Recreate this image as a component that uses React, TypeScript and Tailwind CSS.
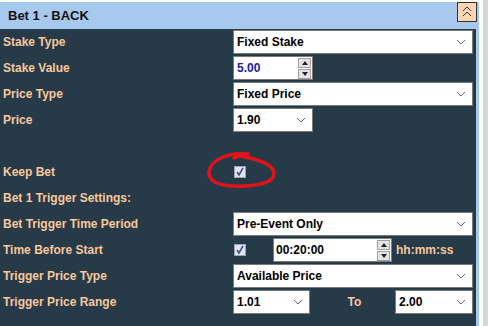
import React from "react";

const font = { fontFamily: '"Liberation Sans", Arial, sans-serif' };

function Chevron() {
  return (
    <svg width="10" height="6" viewBox="0 0 10 6" className="shrink-0">
      <path d="M1 1 L5 5 L9 1" fill="none" stroke="#666" strokeWidth="1" />
    </svg>
  );
}

function Select({ value, w }: { value: string; w: string }) {
  return (
    <div
      className={`${w} h-[24px] bg-white border border-[#7a7a7a] flex items-center justify-between pl-[3px] pr-[6px] text-[12px] font-bold text-black`}
    >
      <span>{value}</span>
      <Chevron />
    </div>
  );
}

function Spinner() {
  return (
    <div className="flex flex-col gap-[1px] mr-[1px]">
      <div className="w-[13px] h-[10px] bg-[#e4e4e4] border border-[#a0a0a0] flex items-center justify-center">
        <svg width="6" height="4" viewBox="0 0 6 4">
          <path d="M0 4 L3 0 L6 4 Z" fill="#222" />
        </svg>
      </div>
      <div className="w-[13px] h-[10px] bg-[#e4e4e4] border border-[#a0a0a0] flex items-center justify-center">
        <svg width="6" height="4" viewBox="0 0 6 4">
          <path d="M0 0 L3 4 L6 0 Z" fill="#222" />
        </svg>
      </div>
    </div>
  );
}

function Checkbox() {
  return (
    <div className="w-[12px] h-[12px] bg-[#dfe5ef] border border-[#9aa3b5] flex items-center justify-center">
      <svg width="10" height="10" viewBox="0 0 10 10">
        <path d="M2 5 L4 8 L8 1" fill="none" stroke="#3e4f94" strokeWidth="1.6" />
      </svg>
    </div>
  );
}

function Label({ children }: { children: React.ReactNode }) {
  return (
    <div className="h-[26px] flex items-center pl-[3px] text-[12px] font-bold text-[#f7c89c] whitespace-nowrap">
      {children}
    </div>
  );
}

function Cell({ children }: { children?: React.ReactNode }) {
  return <div className="h-[26px] flex items-center">{children}</div>;
}

export default function App() {
  return (
    <div className="w-[488px] h-[326px] bg-white flex overflow-hidden" style={font}>
      <div className="w-[479px] mt-[2px] bg-[#a8c9ee] flex flex-col">
        <div className="h-[27px] flex items-start justify-between">
          <div className="h-[27px] flex items-center pl-[8px] text-[13px] font-bold text-[#111]">
            Bet 1 - BACK
          </div>
          <div className="w-[20px] h-[20px] mr-[2px] bg-[#fdd5b3] border border-[#333] flex items-center justify-center">
            <svg width="10" height="12" viewBox="0 0 10 12">
              <path d="M1 5 L5 1 L9 5 M1 10 L5 6 L9 10" fill="none" stroke="#333" strokeWidth="1" />
            </svg>
          </div>
        </div>
        <div className="relative flex-1 mr-[3px] bg-[#273a48] grid grid-cols-[233px_1fr] content-start">
          <Label>Stake Type</Label>
          <Cell>
            <Select value="Fixed Stake" w="w-[240px]" />
          </Cell>

          <Label>Stake Value</Label>
          <Cell>
            <div className="w-[80px] h-[24px] bg-white border border-[#7a7a7a] flex items-center justify-between pl-[3px] text-[12px] font-bold text-[#1c1ca0]">
              <span>5.00</span>
              <Spinner />
            </div>
          </Cell>

          <Label>Price Type</Label>
          <Cell>
            <Select value="Fixed Price" w="w-[240px]" />
          </Cell>

          <Label>Price</Label>
          <Cell>
            <Select value="1.90" w="w-[80px]" />
          </Cell>

          <Label>{""}</Label>
          <Cell />

          <Label>Keep Bet</Label>
          <Cell>
            <div className="ml-[1px]">
              <Checkbox />
            </div>
          </Cell>

          <Label>Bet 1 Trigger Settings:</Label>
          <Cell />

          <Label>Bet Trigger Time Period</Label>
          <Cell>
            <Select value="Pre-Event Only" w="w-[240px]" />
          </Cell>

          <Label>Time Before Start</Label>
          <Cell>
            <div className="ml-[1px]">
              <Checkbox />
            </div>
            <div className="ml-[27px] w-[119px] h-[24px] bg-white border border-[#7a7a7a] flex items-center justify-between pl-[2px] text-[12px] font-bold text-black">
              <span>00:20:00</span>
              <Spinner />
            </div>
            <span className="ml-[4px] text-[12px] font-bold text-[#f7c89c]">hh:mm:ss</span>
          </Cell>

          <Label>Trigger Price Type</Label>
          <Cell>
            <Select value="Available Price" w="w-[240px]" />
          </Cell>

          <Label>Trigger Price Range</Label>
          <Cell>
            <Select value="1.01" w="w-[77px]" />
            <span className="w-[85px] pl-[4px] text-center text-[12px] font-bold text-[#f7c89c]">To</span>
            <Select value="2.00" w="w-[78px]" />
          </Cell>

          <svg
            className="absolute left-0 top-0 pointer-events-none"
            width="476"
            height="297"
            viewBox="0 29 476 297"
          >
            <path
              d="M234 158 C240 155, 250 153, 248 154 C228 152, 210 160, 209 172 C208 184, 226 187, 245 186 C263 185, 275 181, 274 173 C273 164, 258 159, 240 156"
              fill="none"
              stroke="#e3131b"
              strokeWidth="3.5"
              strokeLinecap="round"
            />
          </svg>
        </div>
      </div>
      <div className="w-[4px]" />
      <div className="w-[5px] h-full bg-[#d6d6d6]" />
    </div>
  );
}
